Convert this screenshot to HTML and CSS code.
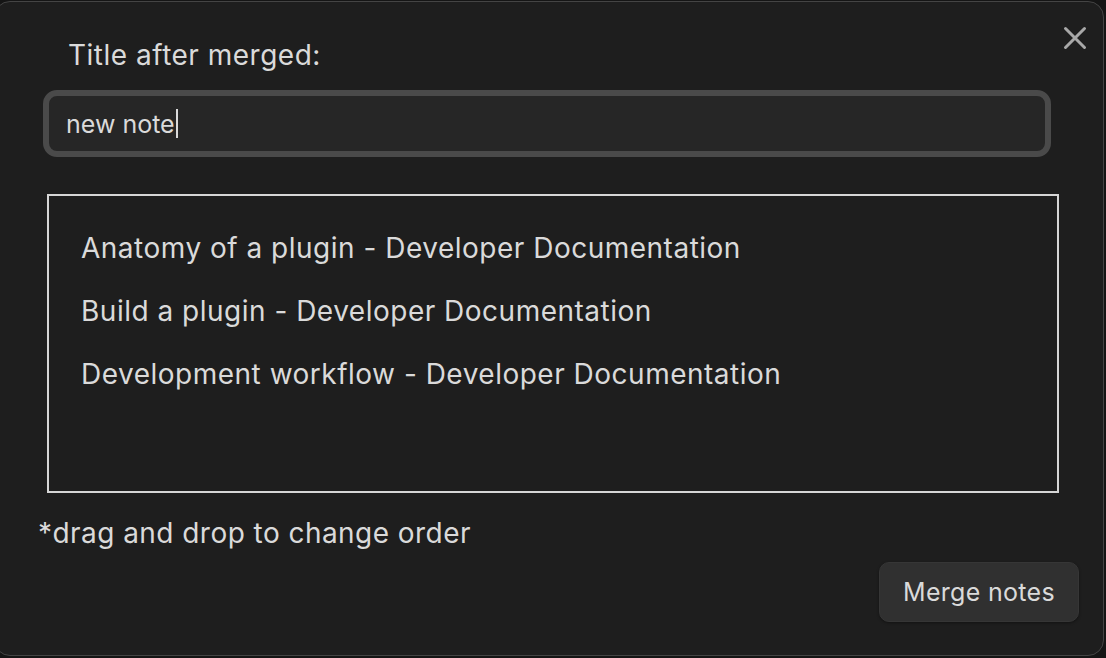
FILE: index.html
```html
<!DOCTYPE html>
<html>
<head>
<meta charset="utf-8">
<link rel="stylesheet" href="styles.css">
</head>
<body>
<div class="modal">
  <button class="close" aria-label="Close">
    <svg width="24" height="24" viewBox="0 0 24 24"><path d="M2.5 2.5 L21.5 21.5 M21.5 2.5 L2.5 21.5" stroke="#a8a8a8" stroke-width="3" stroke-linecap="round"/></svg>
  </button>
  <div class="label">Title after merged:</div>
  <div class="input"><span class="value">new note</span><span class="caret"></span></div>
  <ul class="list">
    <li>Anatomy of a plugin - Developer Documentation</li>
    <li>Build a plugin - Developer Documentation</li>
    <li>Development workflow - Developer Documentation</li>
  </ul>
  <div class="hint">*drag and drop to change order</div>
  <div class="actions"><button class="btn">Merge notes</button></div>
</div>
</body>
</html>
```
FILE: styles.css
```css
html, body {
  margin: 0;
  padding: 0;
  background: #151515;
  width: 1106px;
  height: 658px;
  overflow: hidden;
  font-family: Inter, "Noto Sans", sans-serif;
  color: #dadada;
}
.modal {
  position: relative;
  box-sizing: border-box;
  margin: 1px 0 0 -6px;
  width: 1110px;
  height: 655px;
  background: #1e1e1e;
  border: 1px solid #444;
  border-radius: 16px;
  padding: 0 0 0 5px;
  display: flex;
  flex-direction: column;
}
.close {
  position: absolute;
  top: 22px;
  left: 1066px;
  width: 28px;
  height: 28px;
  padding: 2px;
  background: none;
  border: 0;
}
.close svg { display: block; }
.label {
  margin: 37px 0 0 68px;
  font-size: 28px;
  letter-spacing: 0.5px;
  line-height: 32px;
}
.input {
  box-sizing: border-box;
  margin: 19px 0 0 43px;
  width: 1008px;
  height: 67px;
  border: 6px solid #4a4a4a;
  border-radius: 14px;
  background: #262626;
  display: flex;
  align-items: center;
  padding-left: 17px;
  font-size: 25px;
}
.caret {
  display: inline-block;
  width: 2px;
  height: 29px;
  background: #dadada;
  margin-left: 1px;
}
.list {
  box-sizing: border-box;
  list-style: none;
  margin: 37px 0 0 47px;
  width: 1012px;
  height: 299px;
  border: 2px solid #d6d6d6;
  padding: 36px 0 0 32px;
}
.list li {
  font-size: 28px;
  letter-spacing: 0.5px;
  line-height: 32px;
  margin-bottom: 31px;
}
.hint {
  margin: 24px 0 0 38px;
  font-size: 28px;
  letter-spacing: 0.45px;
  line-height: 32px;
}
.actions {
  display: flex;
  justify-content: flex-end;
  margin: 13px 24px 0 0;
}
.btn {
  width: 200px;
  height: 60px;
  border: 1px solid #363636;
  border-radius: 10px;
  background: #303030;
  color: #dadada;
  font-family: Inter, "Noto Sans", sans-serif;
  font-size: 25px;
  letter-spacing: 0.3px;
  box-shadow: 0 1px 3px rgba(0,0,0,0.4);
}
```
